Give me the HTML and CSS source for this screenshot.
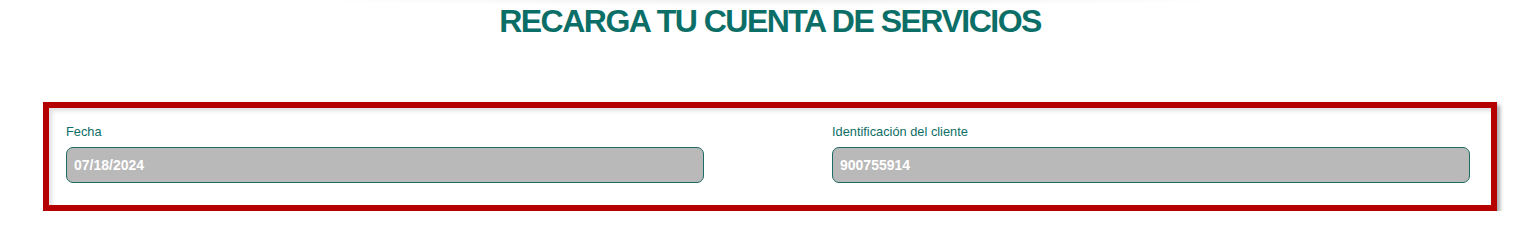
FILE: index.html
```html
<!DOCTYPE html>
<html lang="es">
<head>
<meta charset="utf-8">
<title>Recarga tu cuenta de servicios</title>
<link rel="stylesheet" href="styles.css">
</head>
<body>
<div class="page">
  <div class="topshade"></div>
  <h1 class="title">RECARGA TU CUENTA DE SERVICIOS</h1>
  <form class="frame">
    <div class="field">
      <label class="label" for="fecha">Fecha</label>
      <input class="input" id="fecha" type="text" value="07/18/2024" disabled>
    </div>
    <div class="field">
      <label class="label" for="ident">Identificación del cliente</label>
      <input class="input" id="ident" type="text" value="900755914" disabled>
    </div>
  </form>
</div>
</body>
</html>
```

FILE: styles.css
```css
html, body {
  margin: 0;
  padding: 0;
  background: #ffffff;
}

.page {
  padding: 0 21px 0 43px;
  font-family: "Liberation Sans", Arial, sans-serif;
}

.topshade {
  height: 6px;
  margin: 0 260px -3px 260px;
  background: radial-gradient(ellipse 50% 100% at 50% 0%, rgba(0,0,0,0.06), rgba(0,0,0,0) 100%);
}

.title {
  margin: 0;
  height: 36px;
  line-height: 36px;
  text-align: center;
  font-family: "Liberation Sans", Arial, sans-serif;
  font-weight: bold;
  font-size: 32px;
  letter-spacing: -1.5px;
  color: #0c6f67;
}

.frame {
  margin: 63px 0 0 0;
  border: 6px solid #b50000;
  padding: 16px 21px 22px 17px;
  display: grid;
  grid-template-columns: 1fr 1fr;
  column-gap: 128px;
  box-shadow: 3px 3px 4px rgba(0,0,0,0.35), inset 3px 3px 4px rgba(0,0,0,0.12);
}

.field {
  display: flex;
  flex-direction: column;
  gap: 8px;
}

.label {
  font-size: 12.8px;
  line-height: 15px;
  color: #0e6e66;
}

.input {
  box-sizing: border-box;
  width: 100%;
  height: 36px;
  margin: 0;
  padding: 0 7px;
  border: 1px solid #1e6b63;
  border-radius: 7px;
  background: #b9b9b9;
  color: #ffffff;
  font-family: "Liberation Sans", Arial, sans-serif;
  font-weight: bold;
  font-size: 14px;
  opacity: 1;
  -webkit-text-fill-color: #ffffff;
}
```
